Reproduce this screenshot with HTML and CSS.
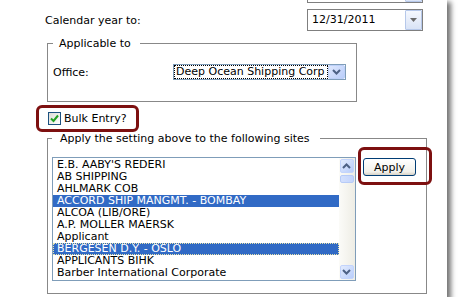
FILE: index.html
```html
<!DOCTYPE html>
<html>
<head>
<meta charset="utf-8">
<link rel="stylesheet" href="styles.css">
</head>
<body>
<div class="panel">
  <div class="row row-prev">
    <span class="label"></span>
    <div class="datebox"><span class="date-text"></span><span class="date-btn"><svg width="7" height="4" viewBox="0 0 7 4"><path d="M0 0H7L3.5 4Z" fill="#6b6b6b"/></svg></span></div>
  </div>
  <div class="row row-cal">
    <span class="label">Calendar year to:</span>
    <div class="datebox"><span class="date-text">12/31/2011</span><span class="date-btn"><svg width="7" height="4" viewBox="0 0 7 4"><path d="M0 0H7L3.5 4Z" fill="#6b6b6b"/></svg></span></div>
  </div>
  <fieldset class="fs fs-app">
    <legend>Applicable to</legend>
    <div class="office-row">
      <span class="office-label">Office:</span>
      <div class="select">
        <span class="select-text">Deep Ocean Shipping Corp</span>
        <span class="select-btn"><svg width="9" height="6" viewBox="0 0 9 6"><path d="M1 1L4.5 4.5L8 1" fill="none" stroke="#4d6185" stroke-width="2"/></svg></span>
      </div>
    </div>
  </fieldset>
  <label class="bulk"><span class="checkbox"><svg width="9" height="9" viewBox="0 0 9 9"><path d="M1 4.5L3.5 7L8 1.5" fill="none" stroke="#21a121" stroke-width="2"/></svg></span><span>Bulk Entry?</span></label>
  <fieldset class="fs fs-sites">
    <legend>Apply the setting above to the following sites</legend>
    <div class="sites">
      <div class="listbox">
        <ul class="items">
          <li>E.B. AABY'S REDERI</li>
          <li>AB SHIPPING</li>
          <li>AHLMARK COB</li>
          <li class="sel">ACCORD SHIP MANGMT. - BOMBAY</li>
          <li>ALCOA (LIB/ORE)</li>
          <li>A.P. MOLLER MAERSK</li>
          <li>Applicant</li>
          <li class="sel focus">BERGESEN D.Y. - OSLO</li>
          <li>APPLICANTS BIHK</li>
          <li>Barber International Corporate</li>
        </ul>
        <div class="scrollbar">
          <div class="sb-top">
            <span class="sb-btn"><svg width="9" height="6" viewBox="0 0 9 6"><path d="M1 5L4.5 1.5L8 5" fill="none" stroke="#4d6185" stroke-width="2"/></svg></span>
            <span class="sb-thumb"></span>
          </div>
          <span class="sb-btn"><svg width="9" height="6" viewBox="0 0 9 6"><path d="M1 1L4.5 4.5L8 1" fill="none" stroke="#4d6185" stroke-width="2"/></svg></span>
        </div>
      </div>
      <button class="apply">Apply</button>
    </div>
  </fieldset>
  <div class="mark mark-bulk"></div>
  <div class="mark mark-apply"></div>
</div>
</body>
</html>
```

FILE: styles.css
```css
* { box-sizing: border-box; }
html, body { margin: 0; padding: 0; background: #fff; }
body {
  font-family: "DejaVu Sans", Verdana, sans-serif;
  font-size: 11px;
  line-height: 13px;
  color: #000;
}
.panel {
  position: relative;
  width: 447px;
  height: 299px;
  margin-top: -2px;
  background: #fff;
  box-shadow: 4px 4px 5px rgba(0, 0, 0, 0.55);
  overflow: hidden;
}
.row {
  display: grid;
  grid-template-columns: 262px 116px;
  align-items: center;
  padding-left: 45px;
  height: 22px;
}
.row-prev { margin-top: -17px; }
.row-cal { margin-top: 6px; }
.datebox {
  height: 22px;
  border: 1px solid #7f7f7f;
  display: flex;
  background: #fff;
}
.date-text { flex: 1; padding-left: 4px; line-height: 20px; }
.date-btn {
  width: 17px;
  border: 1px solid #b6c8ea;
  border-radius: 1px;
  background: linear-gradient(#f5f8fe, #d9e3f6);
  display: flex;
  align-items: center;
  justify-content: center;
}
.fs {
  border: 1px solid #888;
  margin: 0 0 0 47px;
  min-width: 0;
}
.fs legend { padding: 0 9px 0 6px; }
.fs-app {
  width: 310px;
  margin-top: 6px;
  padding: 14px 10px 21px 5px;
}
.office-row { display: flex; align-items: center; }
.office-label { width: 120px; }
.select {
  width: 173px;
  height: 16px;
  border: 1px solid #7f9db9;
  display: flex;
  background: #fff;
}
.select-text {
  flex: 1;
  min-width: 0;
  border: 1px dotted #000;
  padding-left: 1px;
  line-height: 12px;
  white-space: nowrap;
  overflow: hidden;
}
.select-btn {
  width: 17px;
  border: 1px solid #bdd0f9;
  border-radius: 2px;
  background: linear-gradient(135deg, #dfe8fe, #b9cdfa);
  display: flex;
  align-items: center;
  justify-content: center;
}
.bulk {
  display: flex;
  align-items: center;
  gap: 3px;
  margin: 10px 0 0 48px;
  width: max-content;
}
.checkbox {
  width: 13px;
  height: 13px;
  border: 1px solid #1c5180;
  background: linear-gradient(135deg, #dcdcd5, #fff);
  display: flex;
  align-items: center;
  justify-content: center;
}
.fs-sites {
  width: 380px;
  margin-top: 7px;
  padding: 12px 10px 12px 4px;
}
.fs-sites legend { padding: 0 10px 0 8px; }
.sites { display: flex; align-items: flex-start; gap: 7px; }
.listbox {
  width: 309px;
  height: 124px;
  border: 1px solid #7f9db9;
  display: flex;
  background: #fff;
}
.items {
  flex: 1;
  list-style: none;
  margin: 0;
  padding: 1px 0 0 0;
  overflow: hidden;
}
.items li {
  height: 12px;
  line-height: 12px;
  padding-left: 4px;
  white-space: nowrap;
}
.items li.sel { background: #316ac5; color: #fff; }
.items li.focus { outline: 1px dotted #e9e3a9; outline-offset: -1px; }
.scrollbar {
  width: 16px;
  padding: 1px;
  background: linear-gradient(to right, #fbfbf8, #eeede5);
  display: flex;
  flex-direction: column;
  justify-content: space-between;
}
.sb-top { display: flex; flex-direction: column; gap: 2px; }
.sb-btn {
  width: 14px;
  height: 14px;
  border: 1px solid #c3d4fc;
  border-radius: 2px;
  background: linear-gradient(135deg, #e3ecfe, #b8cdfb);
  display: flex;
  align-items: center;
  justify-content: center;
}
.sb-thumb {
  width: 14px;
  height: 8px;
  border: 1px solid #b7cbf7;
  border-radius: 2px;
  background: linear-gradient(to right, #d3e0fd, #c3d4fc);
}
.apply {
  margin-top: 1px;
  width: 54px;
  height: 18px;
  padding: 0;
  border: 1px solid #003c74;
  border-radius: 3px;
  background: linear-gradient(#ffffff, #f1f0ea 80%, #d8d2c6);
  font-family: inherit;
  font-size: 11px;
  color: #000;
}
.mark {
  position: absolute;
  border: 3px solid #7d1010;
  border-radius: 6px;
}
.mark-bulk { left: 36px; top: 107px; width: 103px; height: 27px; }
.mark-apply { left: 358px; top: 149px; width: 74px; height: 38px; }
```
